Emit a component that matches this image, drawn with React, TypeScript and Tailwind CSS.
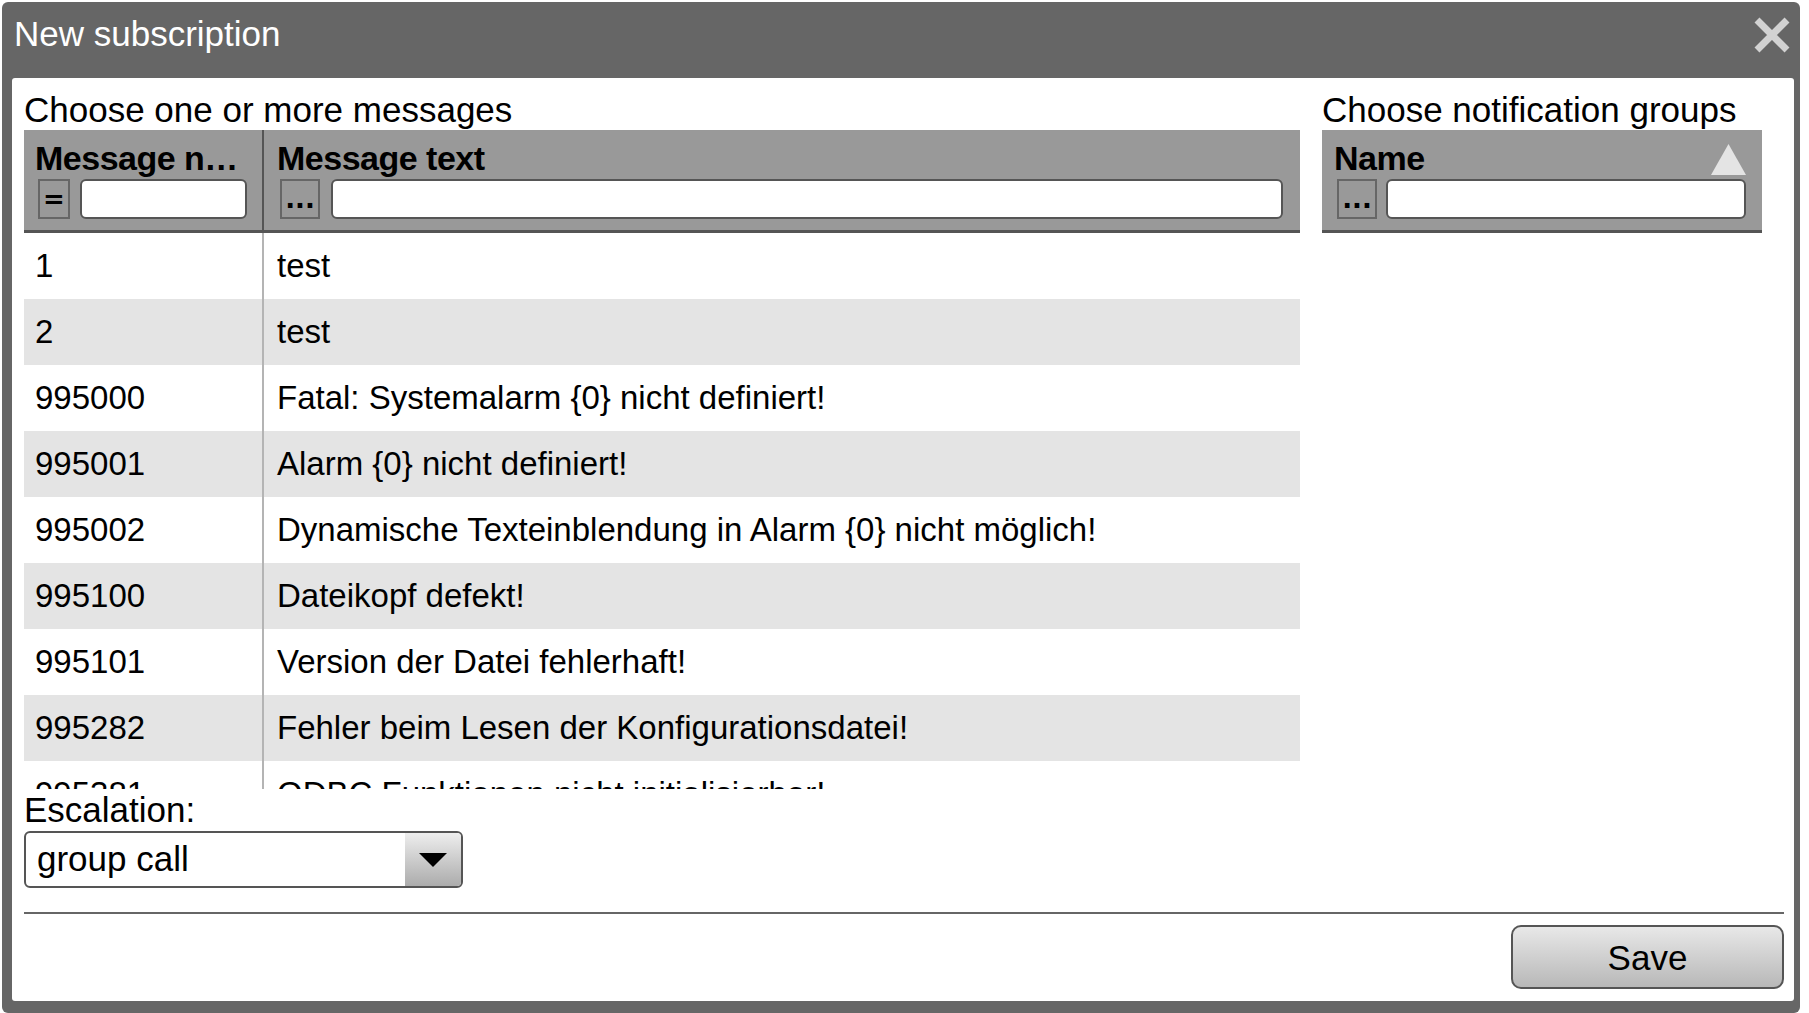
const rows = [
  ["1", "test"],
  ["2", "test"],
  ["995000", "Fatal: Systemalarm {0} nicht definiert!"],
  ["995001", "Alarm {0} nicht definiert!"],
  ["995002", "Dynamische Texteinblendung in Alarm {0} nicht möglich!"],
  ["995100", "Dateikopf defekt!"],
  ["995101", "Version der Datei fehlerhaft!"],
  ["995282", "Fehler beim Lesen der Konfigurationsdatei!"],
  ["995381", "ODBC Funktionen nicht initialisierbar!"],
]

const FilterButton = ({ label, width }: { label: string; width: string }) => (
  <div
    className={`${width} h-[40px] shrink-0 border-2 border-[#666] bg-[#999] flex items-center justify-center font-['DejaVu_Sans',sans-serif] text-[26px] font-bold leading-none text-black`}
  >
    {label}
  </div>
)

const FilterInput = ({ className }: { className: string }) => (
  <div className={`h-[40px] rounded-[6px] border-2 border-[#555] bg-white ${className}`} />
)

const App = () => {
  return (
    <div className="w-[1809px] h-[1013px] bg-white overflow-hidden font-['Liberation_Sans',Arial,sans-serif] text-black">
      <div className="mt-[2px] ml-[2px] w-[1798px] h-[1011px] bg-[#666] rounded-[6px] flex flex-col">
        {/* title bar */}
        <div className="h-[76px] shrink-0 flex items-center justify-between pl-[12px] pr-[9px]">
          <span className="text-white text-[35px] leading-none -mt-[13px]">New subscription</span>
          <svg width="38" height="38" viewBox="0 0 38 38" className="-mt-[10px]">
            <path d="M4 4 L34 34 M34 4 L4 34" stroke="#d2d2d2" strokeWidth="7" />
          </svg>
        </div>

        <div className="flex-1 ml-[10px] mr-[6px] mb-[12px] bg-white rounded-[3px] pl-[12px] pr-[10px] pt-[12px] flex flex-col">
          <div className="flex gap-[22px]">
            {/* messages */}
            <div className="w-[1276px] flex flex-col">
              <div className="h-[40px] text-[35px] leading-[40px]">Choose one or more messages</div>
              <div className="h-[103px] bg-[#999] border-b-[3px] border-[#555] flex">
                <div className="w-[240px] shrink-0 border-r-2 border-[#555] pt-[8px]">
                  <div className="pl-[11px] h-[40px] w-[223px] text-[34px] tracking-[-0.5px] leading-[40px] font-bold truncate">
                    Message number
                  </div>
                  <div className="mt-[1px] pl-[14px] flex">
                    <FilterButton label="=" width="w-[32px]" />
                    <FilterInput className="ml-[10px] w-[167px]" />
                  </div>
                </div>
                <div className="flex-1 pt-[8px]">
                  <div className="pl-[13px] h-[40px] text-[34px] tracking-[-0.5px] leading-[40px] font-bold">Message text</div>
                  <div className="mt-[1px] pl-[16px] pr-[17px] flex">
                    <FilterButton label="..." width="w-[40px]" />
                    <FilterInput className="ml-[11px] flex-1" />
                  </div>
                </div>
              </div>
              <div className="h-[556px] overflow-hidden">
                {rows.map(([num, text], i) => (
                  <div
                    key={num + i}
                    className={`h-[66px] flex text-[33px] ${i % 2 === 1 ? "bg-[#e4e4e4]" : "bg-white"}`}
                  >
                    <div className="w-[240px] shrink-0 pl-[11px] border-r-2 border-[#b4b4b4] flex items-center">{num}</div>
                    <div className="pl-[13px] flex items-center">{text}</div>
                  </div>
                ))}
              </div>
            </div>

            {/* notification groups */}
            <div className="w-[440px] flex flex-col">
              <div className="h-[40px] text-[35px] leading-[40px]">Choose notification groups</div>
              <div className="h-[103px] bg-[#999] border-b-[3px] border-[#555] pt-[8px]">
                <div className="h-[40px] pl-[12px] pr-[16px] flex items-end justify-between">
                  <span className="text-[34px] tracking-[-0.5px] leading-[40px] font-bold">Name</span>
                  <svg width="35" height="31" viewBox="0 0 35 31" className="mb-[3px]">
                    <path d="M17.5 0 L35 31 L0 31 Z" fill="#e4e4e4" />
                  </svg>
                </div>
                <div className="mt-[1px] pl-[15px] pr-[16px] flex">
                  <FilterButton label="..." width="w-[40px]" />
                  <FilterInput className="ml-[9px] flex-1" />
                </div>
              </div>
            </div>
          </div>

          {/* escalation */}
          <div className="h-[42px] text-[35px] leading-[42px]">Escalation:</div>
          <div className="w-[439px] h-[57px] border-2 border-[#555] rounded-[6px] flex overflow-hidden">
            <div className="flex-1 pl-[11px] flex items-center text-[35px]">group call</div>
            <div className="w-[56px] bg-gradient-to-b from-[#eeeeee] to-[#acacac] flex items-center justify-center">
              <svg width="28" height="14" viewBox="0 0 28 14">
                <path d="M0 0 L28 0 L14 14 Z" fill="#000" />
              </svg>
            </div>
          </div>

          <div className="mt-[24px] h-[2px] bg-[#666]" />

          <div className="mt-[11px] flex justify-end">
            <button className="w-[273px] h-[64px] rounded-[10px] border-2 border-[#555] bg-gradient-to-b from-[#e8e8e8] to-[#b8b8b8] text-[35px] leading-none text-black">
              Save
            </button>
          </div>
        </div>
      </div>
    </div>
  )
}

export default App
